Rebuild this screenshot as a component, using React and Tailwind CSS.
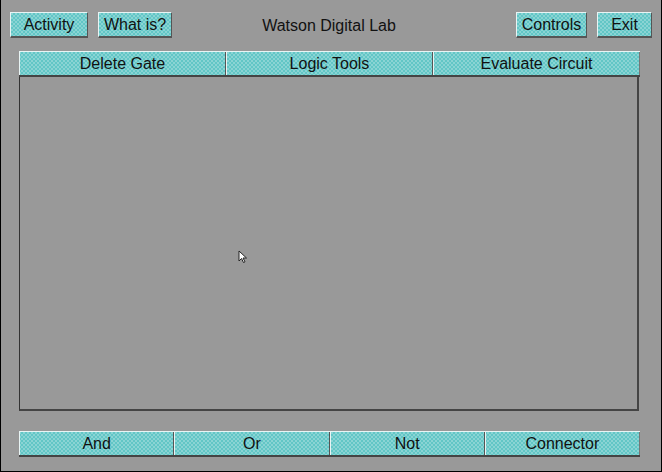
const checker =
  "bg-[conic-gradient(#62c6c6_25%,#8ad4d4_0_50%,#62c6c6_0_75%,#8ad4d4_0)] bg-[length:4px_4px]";

function Btn({ label, w }) {
  return (
    <button
      className={`${checker} ${w} h-[26px] flex items-center justify-center pt-[1px] text-[16px] text-[#111] border-t border-l border-[#e8f4f4] border-r border-b-2 border-r-[#555] border-b-[#555]`}
    >
      {label}
    </button>
  );
}

function Bar({ items, className = "" }) {
  return (
    <div className={`${checker} ${className} flex h-[26px] border-b-2 border-b-[#444] border-t border-t-[#e8f4f4]`}>
      {items.map((label, i) => (
        <div
          key={label}
          className={`flex-1 flex items-center justify-center pt-[1px] text-[16px] text-[#111] border-l border-l-[#e8f4f4] ${
            i < items.length - 1 ? "border-r border-r-[#555]" : "border-r border-r-[#777]"
          }`}
        >
          {label}
        </div>
      ))}
    </div>
  );
}

export default function App() {
  return (
    <div
      className="w-[662px] h-[472px] bg-[#999999] border-x border-b border-black flex flex-col"
      style={{ fontFamily: '"Liberation Sans", Arial, sans-serif' }}
    >
      {/* top row */}
      <div className="grid grid-cols-[1fr_auto_1fr] items-center mt-[12px] px-[9px]">
        <div className="flex gap-[10px]">
          <Btn label="Activity" w="w-[78px]" />
          <Btn label="What is?" w="w-[74px]" />
        </div>
        <div className="text-[16px] text-[#111] -ml-[4px] pt-[1px]">Watson Digital Lab</div>
        <div className="flex gap-[10px] justify-end">
          <Btn label="Controls" w="w-[71px]" />
          <Btn label="Exit" w="w-[55px]" />
        </div>
      </div>

      {/* tools bar + canvas */}
      <div className="ml-[18px] mr-[21px] mt-[13px] flex flex-col">
        <Bar items={["Delete Gate", "Logic Tools", "Evaluate Circuit"]} />
        <div className="relative h-[334px] border-l border-l-[#333] border-r-2 border-r-[#444] border-b-2 border-b-[#444] mr-[1px]">
          <svg className="absolute left-[218px] top-[173px]" width="10" height="14" viewBox="0 0 10 14">
            <path d="M1 1 L1 11 L3.5 8.5 L5.5 12.5 L7 11.8 L5 8 L8.5 8 Z" fill="#fff" stroke="#222" strokeWidth="1" />
          </svg>
        </div>
      </div>

      {/* gate bar */}
      <div className="ml-[18px] mr-[21px] mt-[20px]">
        <Bar items={["And", "Or", "Not", "Connector"]} />
      </div>
    </div>
  );
}
